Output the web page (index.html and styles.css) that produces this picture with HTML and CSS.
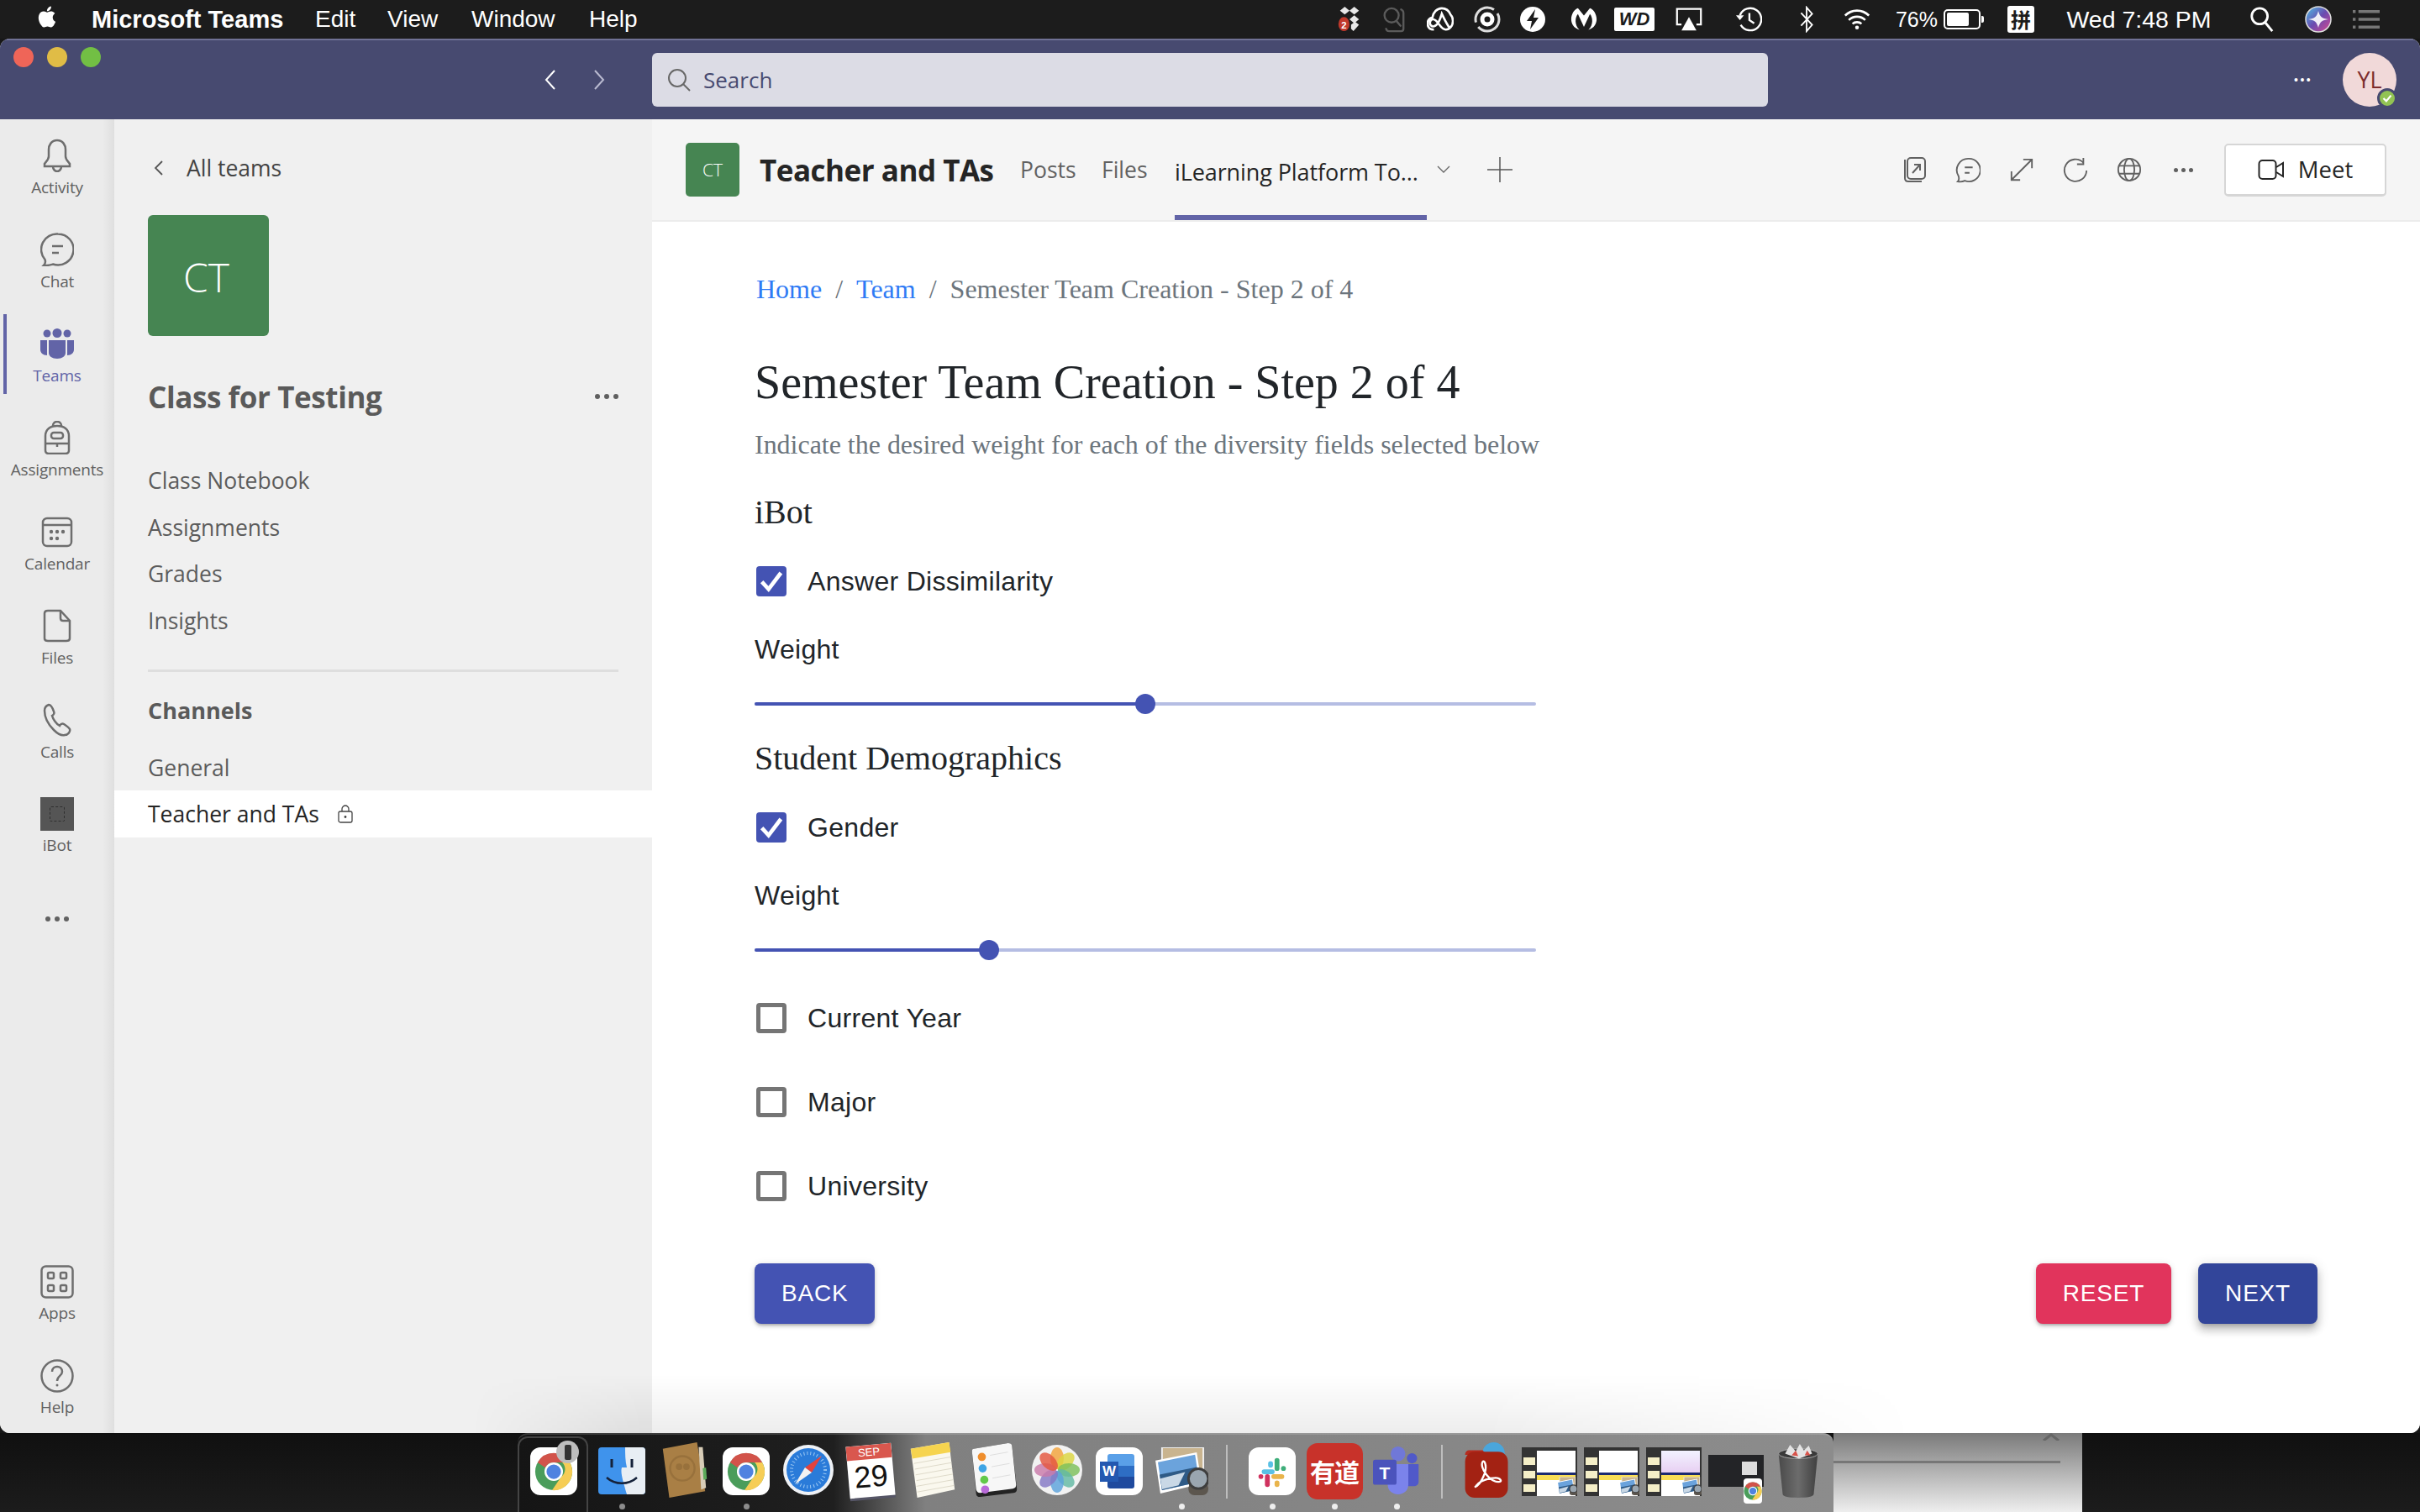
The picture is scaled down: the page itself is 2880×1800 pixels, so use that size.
FILE: index.html
```html
<!DOCTYPE html>
<html lang="en">
<head>
<meta charset="utf-8">
<title>Microsoft Teams</title>
<link rel="stylesheet" href="styles.css">
</head>
<body>
<svg class="defs" width="0" height="0" aria-hidden="true">
  <symbol id="chrome" viewBox="0 0 48 48">
    <circle cx="24" cy="24" r="23" fill="#4a9d5b"/>
    <path d="M4 12.500A23 23 0 0 1 44 12.500H24a11.500 11.500 0 0 0-10.400 6.500z" fill="#d2534a"/>
    <path d="M44 12.500A23 23 0 0 1 22 47L33.500 30a11.500 11.500 0 0 0 1-17.500z" fill="#f6cd55"/>
    <circle cx="24" cy="24" r="11.500" fill="#fff"/>
    <circle cx="24" cy="24" r="9" fill="#4f82e0"/>
  </symbol>
  <symbol id="preview-mini" viewBox="0 0 64 58">
    <rect x="8" y="0" width="50" height="44" fill="#c9b48f" stroke="#eee" stroke-width="2"/>
    <path d="M0 16 50 6l6 38L6 56z" fill="#fff"/>
    <path d="M3 18 48 9l5 33L8 52z" fill="#6ba3dc"/>
    <path d="M5 33 50 24l3 18L8 52z" fill="#2e5a86"/>
    <path d="M6 38l30-8-8 16-20 5z" fill="#c9d8e6"/>
    <rect x="40" y="42" width="24" height="16" rx="7" fill="#5c564e"/>
    <circle cx="52" cy="38" r="12" fill="#9aa6b0" stroke="#3e3e3e" stroke-width="3"/>
  </symbol>
</svg>

<header class="menubar">
  <svg class="apple" viewBox="0 0 24 24"><path fill="#fff" d="M18.710 19.500c-.83 1.240-1.710 2.450-3.050 2.470-1.340.03-1.770-.79-3.290-.79-1.530 0-2 .77-3.270.82-1.310.05-2.300-1.320-3.140-2.530C4.250 17 2.940 12.450 4.700 9.390c.87-1.520 2.430-2.480 4.120-2.510 1.280-.02 2.500.87 3.290.87.78 0 2.260-1.070 3.800-.91.65.03 2.470.26 3.640 1.980-.09.06-2.170 1.280-2.150 3.810.03 3.020 2.650 4.030 2.680 4.040-.03.07-.42 1.440-1.380 2.830M13 3.500c.73-.83 1.940-1.460 2.940-1.500.13 1.170-.34 2.350-1.040 3.190-.69.85-1.830 1.510-2.950 1.420-.15-1.150.41-2.350 1.050-3.110z"/></svg>
  <span class="app-name">Microsoft Teams</span>
  <span class="menu-item">Edit</span>
  <span class="menu-item">View</span>
  <span class="menu-item">Window</span>
  <span class="menu-item">Help</span>
  <div class="tray">
    <svg class="tray-icon" viewBox="0 0 30 34"><g fill="#e8e8e8"><path d="M9 1l6 5-6 5-6-5zM21 1l6 5-6 5-6-5zM21 12l6 5-6 5-6-5zM17 24l5-4 5 4-7 8-3-3z"/></g><ellipse cx="8" cy="23" rx="7" ry="9" fill="#c0392b"/><text x="8" y="29" class="badge-num">2</text></svg>
    <svg class="tray-icon" viewBox="0 0 30 34" fill="none" stroke="#5b5b5b" stroke-width="2.500"><circle cx="13" cy="12" r="9"/><path d="M19 19l6 7M24 4c3 1 4 3 4 5v20c0 2-1 3-3 3H10c-3 0-4-2-4-4"/></svg>
    <svg class="tray-icon" viewBox="0 0 34 32" fill="none" stroke="#fff" stroke-width="2.800"><path d="M9 29c-5 0-8-3-8-8 0-4 3-7 6-7C8 7 13 2 19 2c5 0 9 3 11 8 2 2 3 5 3 8 0 6-4 11-9 11-7 0-10-13-16-13-3 0-4 3-4 5 0 2 2 4 4 4 5 0 9-9 11-16 3 6 6 13 10 18"/></svg>
    <svg class="tray-icon" viewBox="0 0 32 32" fill="none"><circle cx="16" cy="16" r="14" stroke="#ddd" stroke-width="3" stroke-dasharray="34 6"/><circle cx="16" cy="16" r="6" stroke="#fff" stroke-width="5"/></svg>
    <svg class="tray-icon" viewBox="0 0 32 32"><circle cx="16" cy="16" r="15" fill="#fff"/><path d="M19 4 9 18h6l-2 10 10-14h-6z" fill="#1c1c1c"/></svg>
    <svg class="tray-icon" viewBox="0 0 36 32"><path d="M18 26 10 9c-4 4-5 15 2 21-8-2-11-9-11-14C1 8 6 2 10 1l8 10 8-10c4 1 9 7 9 15 0 5-3 12-11 14 7-6 6-17 2-21z" fill="#fff"/></svg>
    <span class="wd-badge">WD</span>
    <svg class="tray-icon" viewBox="0 0 36 32"><path d="M8 23H2V2h32v21h-6" fill="none" stroke="#fff" stroke-width="2.500"/><path d="M18 13l10 18H8z" fill="#fff"/></svg>
    <svg class="tray-icon" viewBox="0 0 34 32" fill="none" stroke="#fff" stroke-width="2.500"><path d="M6 11a14 14 0 1 1 1 12"/><path d="M18 8v9l6 4"/><path d="M1 11h10l-5 6z" fill="#fff" stroke="none"/></svg>
    <svg class="tray-icon tray-narrow" viewBox="0 0 20 34" fill="none" stroke="#fff" stroke-width="2"><path d="M3 9l14 15-7 8V2l7 8L3 25"/></svg>
    <svg class="tray-icon" viewBox="0 0 36 30" fill="none" stroke="#fff" stroke-width="3"><path d="M2 10c9-9 23-9 32 0M7 16c6-6 16-6 22 0M12 21c3-3 9-3 12 0"/><circle cx="18" cy="26" r="2.500" fill="#fff" stroke="none"/></svg>
    <span class="tray-pct">76%</span>
    <span class="battery"><span class="battery-fill"></span></span>
    <span class="pinyin">拼</span>
    <span class="tray-time">Wed 7:48 PM</span>
    <svg class="tray-icon" viewBox="0 0 32 34" fill="none" stroke="#fff" stroke-width="3"><circle cx="13" cy="13" r="10"/><path d="M20 21l9 11"/></svg>
    <svg class="tray-siri" viewBox="0 0 32 32"><defs><linearGradient id="siri-g" x1="0" y1="0" x2="1" y2="1"><stop offset="0" stop-color="#4cc3e8"/><stop offset=".5" stop-color="#6a4bb0"/><stop offset="1" stop-color="#d9478f"/></linearGradient></defs><circle cx="16" cy="16" r="15" fill="url(#siri-g)" stroke="#ddd" stroke-width="1.500"/><path d="M4 16c8-1 10-3 12-10 2 7 4 9 12 10-8 1-10 3-12 10-2-7-4-9-12-10z" fill="#fff" opacity=".9"/></svg>
    <svg class="tray-icon" viewBox="0 0 38 30" fill="#777"><path d="M0 2h4v4H0zM8 2h30v4H8zM0 13h4v4H0zM8 13h30v4H8zM0 24h4v4H0zM8 24h30v4H8z"/></svg>
  </div>
</header>

<div class="window">
  <div class="titlebar">
    <div class="lights">
      <span class="light light-red"></span><span class="light light-yellow"></span><span class="light light-green"></span>
    </div>
    <div class="nav-arrows">
      <svg class="nav-arrow" viewBox="0 0 16 26" fill="none" stroke="#fff" stroke-width="2"><path d="M13 2 3 13l10 11"/></svg>
      <svg class="nav-arrow nav-arrow-off" viewBox="0 0 16 26" fill="none" stroke="#b9bad0" stroke-width="2"><path d="M3 2l10 11L3 24"/></svg>
    </div>
    <div class="search">
      <svg class="search-icon" viewBox="0 0 28 28" fill="none" stroke="#686868" stroke-width="2"><circle cx="12" cy="12" r="10"/><path d="M19 19l8 8"/></svg>
      <span>Search</span>
    </div>
    <span class="title-dots">•••</span>
    <div class="avatar">YL<span class="status"><svg viewBox="0 0 16 16" fill="none" stroke="#fff" stroke-width="2"><path d="M4 8l3 3 5-6"/></svg></span></div>
  </div>

  <div class="workspace">
    <nav class="rail">
      <div class="rail-item">
        <svg class="rail-icon" viewBox="0 0 40 40"><path d="M20 2c-7 0-10 6-10 11v8c0 4-3 6-5 9v3h30v-3c-2-3-5-5-5-9v-8c0-5-3-11-10-11z"/><path d="M15 33c0 3 2 6 5 6s5-3 5-6"/></svg>
        <span class="rail-label">Activity</span>
      </div>
      <div class="rail-item">
        <svg class="rail-icon" viewBox="0 0 40 40"><path d="M21 1.500a18.500 18.500 0 1 1-6 36c-3 1.500-7 1.500-11 1.500 2-2 2.500-4 1.500-7A18.500 18.500 0 0 1 21 1.500z"/><path d="M14 16h13M14 24h8"/></svg>
        <span class="rail-label">Chat</span>
      </div>
      <div class="rail-item rail-item-active">
        <svg class="rail-icon rail-icon-solid" viewBox="0 0 40 36"><circle cx="8" cy="6" r="4.500"/><circle cx="20" cy="5.500" r="5.500"/><circle cx="32" cy="6" r="4.500"/><path d="M0 14h8v18c-5 0-8-3-8-7zM32 14h8v11c0 4-3 7-8 7zM10 14h20v15c0 4-4 7-10 7s-10-3-10-7z"/></svg>
        <span class="rail-label">Teams</span>
      </div>
      <div class="rail-item">
        <svg class="rail-icon" viewBox="0 0 40 40"><path d="M6 18c0-8 6-12 14-12s14 4 14 12v17c0 3-2 4-4 4H10c-2 0-4-1-4-4z"/><path d="M15 6c0-3 2-5 5-5s5 2 5 5"/><rect x="13" y="14" width="14" height="7" rx="3"/><path d="M6 27h28M20 27v4"/></svg>
        <span class="rail-label">Assignments</span>
      </div>
      <div class="rail-item">
        <svg class="rail-icon" viewBox="0 0 40 40"><rect x="3" y="4" width="34" height="33" rx="5"/><path d="M3 12h34"/><g class="rail-dots"><circle cx="13" cy="20" r="2.200"/><circle cx="20" cy="20" r="2.200"/><circle cx="27" cy="20" r="2.200"/><circle cx="13" cy="28" r="2.200"/><circle cx="20" cy="28" r="2.200"/></g></svg>
        <span class="rail-label">Calendar</span>
      </div>
      <div class="rail-item">
        <svg class="rail-icon" viewBox="0 0 40 40"><path d="M9 2h15l11 12v21c0 2-2 3-4 3H9c-2 0-4-1-4-3V5c0-2 2-3 4-3z"/><path d="M24 2v9c0 2 1 3 3 3h8"/></svg>
        <span class="rail-label">Files</span>
      </div>
      <div class="rail-item">
        <svg class="rail-icon" viewBox="0 0 40 40"><path d="M10 2c-3 1-5 3-5 7 0 9 5 17 11 23 4 4 9 7 13 6 4 0 7-4 6-7-1-2-4-4-7-6-2-1-4 0-5 2-4-2-8-8-9-12 2-1 3-3 2-5-1-3-3-8-6-8z"/></svg>
        <span class="rail-label">Calls</span>
      </div>
      <div class="rail-item rail-item-ibot">
        <span class="ibot-tile"><span class="ibot-inner"></span></span>
        <span class="rail-label">iBot</span>
      </div>
      <div class="rail-more"><span></span><span></span><span></span></div>
      <div class="rail-bottom">
        <div class="rail-item">
          <svg class="rail-icon" viewBox="0 0 40 40"><rect x="1.500" y="1.500" width="37" height="37" rx="5"/><rect x="9" y="9" width="7" height="7" rx="1.500"/><rect x="24" y="9" width="7" height="7" rx="1.500"/><rect x="9" y="24" width="7" height="7" rx="1.500"/><rect x="24" y="24" width="7" height="7" rx="1.500"/></svg>
          <span class="rail-label">Apps</span>
        </div>
        <div class="rail-item">
          <svg class="rail-icon" viewBox="0 0 40 40"><circle cx="20" cy="20" r="18.500"/><path d="M14 15c0-4 3-6 6-6s6 2 6 6c0 5-6 5-6 11"/><circle class="rail-fill" cx="20" cy="31" r="1.500"/></svg>
          <span class="rail-label">Help</span>
        </div>
      </div>
    </nav>

    <aside class="panel">
      <div class="back-row">
        <svg class="back-chevron" viewBox="0 0 12 20" fill="none" stroke="#555" stroke-width="1.800"><path d="M10 2 2 10l8 8"/></svg>
        <span>All teams</span>
      </div>
      <div class="team-tile">CT</div>
      <div class="team-title-row">
        <span class="team-title">Class for Testing</span>
        <span class="dots dots-team"><span></span><span></span><span></span></span>
      </div>
      <ul class="panel-list panel-list-top">
        <li class="panel-item">Class Notebook</li>
        <li class="panel-item">Assignments</li>
        <li class="panel-item">Grades</li>
        <li class="panel-item">Insights</li>
      </ul>
      <div class="panel-divider"></div>
      <div class="channels-head">Channels</div>
      <ul class="panel-list panel-list-channels">
        <li class="panel-item">General</li>
        <li class="panel-item panel-item-active">Teacher and TAs
          <svg class="lock" viewBox="0 0 20 22" fill="none" stroke="#444" stroke-width="1.300"><rect x="2" y="8" width="16" height="13" rx="2"/><path d="M6 8V5c0-2 2-4 4-4s4 2 4 4v3"/><circle cx="10" cy="14.500" r=".8" fill="#444"/></svg>
        </li>
      </ul>
    </aside>

    <main class="main">
      <div class="chan-header">
        <div class="chan-tile">CT</div>
        <span class="chan-title">Teacher and TAs</span>
        <span class="chan-tab chan-tab-posts">Posts</span>
        <span class="chan-tab chan-tab-files">Files</span>
        <span class="chan-tab-active">iLearning Platform To...</span>
        <svg class="tab-chevron" viewBox="0 0 16 10" fill="none" stroke="#666" stroke-width="1.300"><path d="M1 1l7 7 7-7"/></svg>
        <svg class="tab-plus" viewBox="0 0 30 30" stroke="#555" stroke-width="1.500"><path d="M15 0v30M0 15h30"/></svg>
        <div class="chan-tools">
          <span class="tool"><svg viewBox="0 0 30 32" fill="none" stroke="#616161" stroke-width="2"><path d="M4 4v22c0 3 2 4 4 4h16"/><rect x="7" y="2" width="21" height="25" rx="4"/><path d="M13 20l9-10M15 10h7v7"/></svg></span>
          <span class="tool"><svg viewBox="0 0 32 32" fill="none" stroke="#616161" stroke-width="2"><path d="M17 2a14.500 14.500 0 1 1-5 28c-2 1-6 1.500-9 1 2-2 2-4 1-7A14.500 14.500 0 0 1 17 2z"/><path d="M12 13h10M12 20h6"/></svg></span>
          <span class="tool"><svg viewBox="0 0 32 32" fill="none" stroke="#616161" stroke-width="2"><path d="M4 28 28 4M18 3h11v11M3 18v11h11"/></svg></span>
          <span class="tool"><svg viewBox="0 0 32 32" fill="none" stroke="#616161" stroke-width="2"><path d="M26 7a14 14 0 1 0 4 10"/><path d="M26 1v8h-8"/></svg></span>
          <span class="tool"><svg viewBox="0 0 32 32" fill="none" stroke="#616161" stroke-width="2"><circle cx="16" cy="16" r="14"/><ellipse cx="16" cy="16" rx="6.500" ry="14"/><path d="M3 11h26M3 21h26"/></svg></span>
          <span class="tool"><span class="dots dots-tool"><span></span><span></span><span></span></span></span>
          <button class="meet-btn" type="button"><svg viewBox="0 0 32 26" fill="none" stroke="#252525" stroke-width="2"><rect x="1.500" y="2" width="20" height="22" rx="4"/><path d="M22 10l8-5v16l-8-5"/></svg>Meet</button>
        </div>
      </div>

      <div class="content">
        <div class="crumbs">
          <a class="crumb-link">Home</a><span class="crumb-sep">/</span><a class="crumb-link">Team</a><span class="crumb-sep">/</span><span class="crumb-now">Semester Team Creation - Step 2 of 4</span>
        </div>
        <h1 class="page-title">Semester Team Creation - Step 2 of 4</h1>
        <p class="page-sub">Indicate the desired weight for each of the diversity fields selected below</p>
        <h2 class="group-title group-first">iBot</h2>
        <div class="check-row check-after-title"><span class="box box-on"><svg viewBox="0 0 24 24" fill="none" stroke="#fff" stroke-width="3.500"><path d="M3.500 12.500l6 6.500L20.500 4.500"/></svg></span><span class="check-label">Answer Dissimilarity</span></div>
        <div class="weight">Weight</div>
        <div class="slider"><span class="slider-fill slider-fill-half"></span><span class="thumb"></span></div>
        <h2 class="group-title group-second">Student Demographics</h2>
        <div class="check-row check-after-title"><span class="box box-on"><svg viewBox="0 0 24 24" fill="none" stroke="#fff" stroke-width="3.500"><path d="M3.500 12.500l6 6.500L20.500 4.500"/></svg></span><span class="check-label">Gender</span></div>
        <div class="weight">Weight</div>
        <div class="slider"><span class="slider-fill slider-fill-third"></span><span class="thumb"></span></div>
        <div class="check-row check-first-off"><span class="box"></span><span class="check-label">Current Year</span></div>
        <div class="check-row check-off"><span class="box"></span><span class="check-label">Major</span></div>
        <div class="check-row check-off"><span class="box"></span><span class="check-label">University</span></div>
        <div class="actions">
          <button class="btn btn-back" type="button">BACK</button>
          <button class="btn btn-reset" type="button">RESET</button>
          <button class="btn btn-next" type="button">NEXT</button>
        </div>
      </div>
    </main>
  </div>
  <div class="dock-glow"></div>
</div>

<div class="desktop">
  <div class="dock">
    <div class="dock-item dock-item-recent">
      <span class="tile-white"><svg viewBox="0 0 48 48"><use href="#chrome"/></svg></span>
      <span class="phone-badge"><span class="phone-shape"></span></span>
    </div>
    <div class="dock-item dock-run dock-run-dim">
      <svg class="dock-svg" viewBox="0 0 56 56"><rect width="56" height="56" rx="4" fill="#3f93ec"/><path d="M32 0h20a4 4 0 0 1 4 4v48a4 4 0 0 1-4 4H34c-4-14-8-26-6-32h6c-2-8-2-16-2-24z" fill="#e8eef4"/><path d="M16 14v10M40 14v10" stroke="#15223a" stroke-width="3"/><path d="M10 36c10 9 26 9 36 0" fill="none" stroke="#15223a" stroke-width="2.500"/></svg>
    </div>
    <div class="dock-item">
      <svg class="dock-svg dock-svg-tall" viewBox="0 0 56 68"><path d="M2 8 44 0l10 60-44 8z" fill="#a97f45"/><path d="M46 6h5l4 50-6 2z" fill="#d8cdb8"/><path d="M51 32l4-1 1 14-4 1z" fill="#5cab5a"/><circle cx="26" cy="32" r="15" fill="none" stroke="#98713c" stroke-width="2.500"/><circle cx="22" cy="30" r="4" fill="#98713c"/><circle cx="31" cy="30" r="4" fill="#98713c"/></svg>
    </div>
    <div class="dock-item dock-run dock-run-dim">
      <span class="tile-white"><svg viewBox="0 0 48 48"><use href="#chrome"/></svg></span>
    </div>
    <div class="dock-item">
      <svg class="dock-svg dock-svg-round" viewBox="0 0 60 60"><circle cx="30" cy="30" r="30" fill="#eef1f5"/><circle cx="30" cy="30" r="26" fill="#2a7bd9"/><circle cx="30" cy="30" r="20" fill="none" stroke="#9cc8f2" stroke-width="4" stroke-dasharray="1 3"/><path d="M46 13 26 27l8 6z" fill="#e2433d"/><path d="M14 47 34 33l-8-6z" fill="#f2f2f2"/></svg>
    </div>
    <div class="dock-item">
      <div class="cal-tile"><span class="cal-month">SEP</span><span class="cal-day">29</span></div>
    </div>
    <div class="dock-item">
      <svg class="dock-svg dock-svg-tall" viewBox="0 0 56 68"><path d="M1 8 48 0l7 58-46 10z" fill="#faf8ee"/><path d="M1 8 48 0l2 12-47 8z" fill="#f6d44f"/><path d="M5 26l45-8M6 33l45-8M7 40l45-8M8 47l45-8M8 54l45-8M9 61l45-8" stroke="#ddd9c8" stroke-width="1"/></svg>
    </div>
    <div class="dock-item">
      <svg class="dock-svg dock-svg-tall" viewBox="0 0 56 68"><path d="M2 8 44 1c3 0 5 1 5 4l6 52c0 3-1 5-4 5L10 67c-3 0-5-1-5-4L0 12c0-2 0-4 2-4z" fill="#232323"/><path d="M2 8 44 1c3 0 5 1 5 4l5 47c0 3-1 4-4 5L10 62c-3 0-4-1-5-4L0 12c0-2 0-4 2-4z" fill="#f7f7f7"/><circle cx="12" cy="18" r="5" fill="#ef8e2c"/><circle cx="13" cy="32" r="5" fill="#3fa5e5"/><circle cx="15" cy="46" r="5" fill="#62c94a"/><circle cx="16" cy="58" r="5" fill="#b96ad9"/><path d="M22 16l22-4M24 30l22-4M25 44l22-4" stroke="#ddd" stroke-width="1"/></svg>
    </div>
    <div class="dock-item">
      <svg class="dock-svg dock-svg-round" viewBox="0 0 60 60"><circle cx="30" cy="30" r="30" fill="#f2f2f2"/><g fill-opacity=".82"><ellipse cx="30" cy="16" rx="8" ry="13" fill="#f3a33b"/><ellipse cx="30" cy="16" rx="8" ry="13" fill="#dcd53f" transform="rotate(45 30 30)"/><ellipse cx="30" cy="16" rx="8" ry="13" fill="#7cc05a" transform="rotate(90 30 30)"/><ellipse cx="30" cy="16" rx="8" ry="13" fill="#63b9a3" transform="rotate(135 30 30)"/><ellipse cx="30" cy="16" rx="8" ry="13" fill="#5ba2dc" transform="rotate(180 30 30)"/><ellipse cx="30" cy="16" rx="8" ry="13" fill="#8477c5" transform="rotate(225 30 30)"/><ellipse cx="30" cy="16" rx="8" ry="13" fill="#c97aa9" transform="rotate(270 30 30)"/><ellipse cx="30" cy="16" rx="8" ry="13" fill="#e4573f" transform="rotate(315 30 30)"/></g></svg>
    </div>
    <div class="dock-item">
      <div class="word-tile"><span class="word-page"></span><span class="word-w">W</span></div>
    </div>
    <div class="dock-item dock-run">
      <svg class="dock-preview" viewBox="0 0 64 58"><use href="#preview-mini"/></svg>
    </div>
    <span class="dock-sep"></span>
    <div class="dock-item dock-run">
      <span class="tile-white"><svg viewBox="0 0 48 48"><rect x="11" y="21" width="16" height="6" rx="3" fill="#59c0e5"/><rect x="19" y="11" width="6" height="8" rx="3" fill="#59c0e5"/><rect x="27" y="7" width="6" height="16" rx="3" fill="#3fae7a"/><rect x="35" y="17" width="6" height="6" rx="3" fill="#3fae7a"/><rect x="7" y="27" width="6" height="6" rx="3" fill="#d0335f"/><rect x="15" y="27" width="6" height="16" rx="3" fill="#d0335f"/><rect x="23" y="27" width="16" height="6" rx="3" fill="#e9b44c"/><rect x="27" y="35" width="6" height="8" rx="3" fill="#e9b44c"/></svg></span>
    </div>
    <div class="dock-item dock-run">
      <div class="youdao">有道</div>
    </div>
    <div class="dock-item dock-run">
      <svg class="dock-svg dock-svg-tall" viewBox="0 0 64 68"><circle cx="34" cy="12" r="10" fill="#7078d8"/><circle cx="53" cy="18" r="7" fill="#5059c9"/><path d="M44 26h18v24c0 4-3 6-7 6H44z" fill="#5059c9"/><path d="M20 26h28v28c0 8-6 13-14 13S20 62 20 54z" fill="#7b83eb"/><rect y="20" width="32" height="34" rx="3" fill="#4b53bc"/><text x="16" y="46" class="teams-t">T</text></svg>
    </div>
    <span class="dock-sep"></span>
    <div class="dock-item">
      <div class="acrobat">
        <svg viewBox="0 0 56 70"><circle cx="36" cy="14" r="14" fill="#4aa6dc"/><path d="M0 16c0-4 2-6 6-6h16l6 6H0z" fill="#b52b1e"/><rect y="12" width="54" height="58" rx="12" fill="#a32213"/><path d="M13 56c6-2 16-20 12-30-2-5-5 0-3 6 3 9 12 18 20 18 6 0 2-5-3-5-8 0-20 3-24 9-2 2-2 3-2 2z" fill="none" stroke="#fff" stroke-width="2.500"/></svg>
      </div>
    </div>
    <div class="dock-item">
      <div class="thumb-shot"><span class="shot-side"></span><span class="shot-page"></span><span class="shot-band"></span><svg class="shot-preview" viewBox="0 0 64 58"><use href="#preview-mini"/></svg></div>
    </div>
    <div class="dock-item">
      <div class="thumb-shot"><span class="shot-side"></span><span class="shot-page"></span><span class="shot-band"></span><svg class="shot-preview" viewBox="0 0 64 58"><use href="#preview-mini"/></svg></div>
    </div>
    <div class="dock-item">
      <div class="thumb-shot"><span class="shot-side"></span><span class="shot-page shot-page-marked"></span><span class="shot-band"></span><svg class="shot-preview" viewBox="0 0 64 58"><use href="#preview-mini"/></svg></div>
    </div>
    <div class="dock-item">
      <div class="thumb-dark"><span class="dark-card"></span><span class="dark-chrome"><svg viewBox="0 0 48 48"><use href="#chrome"/></svg></span></div>
    </div>
    <div class="dock-item">
      <svg class="dock-svg dock-svg-tall" viewBox="0 0 52 68"><defs><linearGradient id="trash-g" x1="0" y1="0" x2="1" y2="0"><stop offset="0" stop-color="#4a4a4a"/><stop offset=".5" stop-color="#6c6c6c"/><stop offset="1" stop-color="#3f3f3f"/></linearGradient></defs><path d="M2 14h48l-5 50c-1 3-7 4-19 4S8 67 7 64z" fill="url(#trash-g)"/><ellipse cx="26" cy="14" rx="24" ry="6" fill="#3a3a3a" stroke="#aaa"/><path d="M10 14 16 3l7 8 5-9 5 8 6-6 4 10-16 6z" fill="#e4e4e4"/><path d="M18 16l5-6 3 7zM34 16l3-6 4 6z" fill="#d8534a"/></svg>
    </div>
  </div>
  <div class="behind-window"><svg class="behind-caret" viewBox="0 0 20 9" fill="none" stroke="#666" stroke-width="3"><path d="M1 9l9-7 9 7"/></svg><span class="behind-line"></span></div>
</div>
</body>
</html>
```

FILE: styles.css
```css
* { box-sizing: border-box; }
html, body { margin: 0; padding: 0; }
body {
  width: 2880px;
  height: 1800px;
  overflow: hidden;
  display: grid;
  grid-template-rows: 46px 1660px 94px;
  background: #171717;
  font-family: "Open Sans", "Noto Sans", sans-serif;
  color: #252525;
}
.defs { position: absolute; }

/* Menu bar */
.menubar {
  display: flex;
  align-items: center;
  background: #1c1c1c;
  color: #fff;
  font-family: "Liberation Sans", sans-serif;
  font-size: 28px;
  padding-left: 41px;
}
.apple { width: 30px; height: 34px; margin-top: -6px; }
.app-name { font-weight: 700; font-size: 29px; margin-left: 38px; width: 266px; flex: none; }
.menu-item:nth-of-type(2) { width: 86px; }
.menu-item:nth-of-type(3) { width: 100px; }
.menu-item:nth-of-type(4) { width: 140px; }
.menu-item { flex: none; }
.tray {
  margin-left: auto;
  display: grid;
  grid-template-columns: 52px 52px 60px 52px 56px 66px 54px 76px 66px 72px 48px 72px 58px 82px 199px 94px 40px 74px;
  align-items: center;
  justify-items: center;
  padding-right: 27px;
}
.tray-icon { width: 32px; height: 32px; }
.tray-narrow { width: 20px; }
.badge-num { font: 700 12px "Liberation Sans", sans-serif; fill: #fff; text-anchor: middle; }
.wd-badge {
  width: 48px; height: 28px;
  background: #fff; color: #1c1c1c;
  font: italic 700 22px/28px "Liberation Sans", sans-serif;
  text-align: center; border-radius: 2px;
}
.tray-pct { justify-self: end; font-size: 25px; }
.battery {
  width: 44px; height: 24px;
  border: 2px solid #fff; border-radius: 5px;
  padding: 2px; display: block; position: relative;
}
.battery::after {
  content: ""; position: absolute; right: -6px; top: 6px;
  width: 3px; height: 8px; background: #fff; border-radius: 0 2px 2px 0;
}
.battery-fill { display: block; width: 72%; height: 100%; background: #fff; border-radius: 2px; }
.pinyin {
  width: 32px; height: 32px; background: #fff; color: #1c1c1c;
  border-radius: 3px; text-align: center;
  font: 700 24px/32px "Noto Sans CJK SC", sans-serif;
}
.tray-time { font-size: 28.500px; white-space: nowrap; }
.tray-siri { width: 32px; height: 32px; }

/* Window */
.window {
  position: relative;
  border-radius: 12px;
  overflow: hidden;
  display: flex;
  flex-direction: column;
  background: #fff;
}
.titlebar {
  height: 96px;
  flex: none;
  display: flex;
  align-items: center;
  background: #474a70;
  border-top: 2px solid #6f7194;
  padding-left: 16px;
  position: relative;
}
.lights { display: flex; gap: 16px; align-self: flex-start; margin-top: 8px; width: 104px; flex: none; }
.light { width: 24px; height: 24px; border-radius: 50%; flex: none; }
.light-red { background: #ef6558; }
.light-yellow { background: #e0bc46; }
.light-green { background: #72bf44; }
.nav-arrows { display: flex; gap: 42px; margin-left: 527px; width: 129px; flex: none; }
.nav-arrow { width: 16px; height: 26px; flex: none; }
.search {
  width: 1328px; height: 64px; flex: none;
  background: #dcdce5; border-radius: 6px;
  display: flex; align-items: center; gap: 15px;
  padding-left: 18px;
  color: #474a70; font-size: 26px;
}
.search-icon { width: 28px; height: 28px; }
.title-dots { color: #fff; font-size: 14px; letter-spacing: 2.500px; margin-left: 626px; width: 58px; flex: none; font-family: "Liberation Sans", sans-serif; }
.avatar {
  width: 64px; height: 64px; border-radius: 50%;
  background: #f1d9d9; color: #7c2d2d;
  font-size: 27px; line-height: 64px; text-align: center;
  position: relative; flex: none;
}
.status {
  position: absolute; right: -1px; bottom: -2px;
  width: 24px; height: 24px; border-radius: 50%;
  background: #92c353; border: 3px solid #474a70;
  display: flex;
}
.status svg { width: 100%; height: 100%; }

.workspace { flex: 1; display: flex; min-height: 0; }

/* Rail */
.rail {
  width: 136px; flex: none;
  background: linear-gradient(to right, #ebebeb 0, #ebebeb 122px, #dfdfdf 136px);
  display: flex; flex-direction: column;
  padding-top: 12px; position: relative;
}
.rail-item {
  height: 99px; margin-bottom: 13px; padding-top: 11px;
  display: flex; flex-direction: column; align-items: center;
  position: relative; flex: none;
}
.rail-icon { width: 40px; height: 40px; fill: none; stroke: #6e6e6e; stroke-width: 2.500; flex: none; }
.rail-icon-solid { fill: #6264a7; stroke: none; }
.rail-dots, .rail-fill { fill: #6e6e6e; stroke: none; }
.rail-label { font-size: 19px; line-height: 24px; margin-top: 6px; color: #616161; letter-spacing: -.2px; }
.rail-item-active .rail-label { color: #6264a7; }
.rail-item-active::before {
  content: ""; position: absolute; left: 4px; top: -4px; width: 4px; height: 95px;
  background: #6264a7;
}
.ibot-tile {
  width: 40px; height: 40px; flex: none; background: #555;
  display: flex; align-items: center; justify-content: center;
}
.ibot-inner { width: 18px; height: 18px; border: 1.500px dashed #2f2f2f; border-radius: 2px; }
.rail-item-ibot .rail-label { margin-top: 5px; }
.rail-more { display: flex; justify-content: center; gap: 5px; margin-top: 41px; }
.rail-more span { width: 6px; height: 6px; border-radius: 50%; background: #616161; }
.rail-bottom { margin-top: auto; }
.rail-bottom .rail-label { margin-top: 5px; }
.rail-bottom .rail-item:last-child { margin-bottom: 0; }

/* Panel */
.panel {
  width: 640px; flex: none;
  background: #f0f0f0;
  padding: 38px 40px 0;
  font-size: 26.500px; color: #5c5c5c;
}
.back-row { height: 40px; display: flex; align-items: center; gap: 27px; padding-left: 7px; color: #444; }
.back-chevron { width: 12px; height: 20px; flex: none; }
.team-tile {
  width: 144px; height: 144px; margin-top: 36px;
  background: #468552; border-radius: 6px; color: #fff;
  font-size: 48px; font-weight: 300; line-height: 148px; text-align: center; padding-right: 5px;
}
.team-title-row { display: flex; justify-content: space-between; align-items: center; margin-top: 48px; height: 48px; }
.team-title { font-weight: 700; font-size: 35px; color: #5a5a5a; letter-spacing: -.4px; }
.dots { display: flex; gap: 4px; }
.dots span { width: 5px; height: 5px; border-radius: 50%; background: #5f5f5f; }
.dots-team { gap: 5px; }
.dots-team span { width: 6px; height: 6px; }
.panel-list { list-style: none; margin: 0; padding: 0; }
.panel-list-top { margin-top: 48px; }
.panel-list-channels { margin-top: 20px; }
.panel-item { height: 55.700px; display: flex; align-items: center; }
.panel-item-active {
  background: #fff; color: #252525;
  margin: 0 -40px; padding-left: 40px;
}
.lock { width: 20px; height: 22px; margin-left: 21px; }
.panel-divider { height: 3px; background: #dedede; margin-top: 30px; }
.channels-head { font-weight: 700; height: 40px; line-height: 40px; margin-top: 26px; color: #5a5a5a; font-size: 27px; }

/* Main */
.main { flex: 1; min-width: 0; background: #fff; display: flex; flex-direction: column; }
.chan-header {
  height: 122px; flex: none;
  background: #f5f5f5;
  border-bottom: 2px solid #ececec;
  display: flex; align-items: center;
  padding: 0 40px;
}
.chan-tile {
  width: 64px; height: 64px; flex: none;
  background: #468552; border-radius: 5px; color: #fff;
  font-size: 21px; font-weight: 300; line-height: 64px; text-align: center;
}
.chan-title { font-weight: 700; font-size: 35px; margin-left: 24px; width: 310px; flex: none; letter-spacing: -.5px; }
.chan-tab { font-size: 26.500px; color: #616161; flex: none; }
.chan-tab-posts { width: 97px; }
.chan-tab-files { width: 87px; }
.chan-tab-active {
  width: 300px; flex: none; height: 120px;
  margin-bottom: 0; padding-top: 44px;
  border-bottom: 6px solid #6264a7;
  font-size: 27px; font-weight: 500; white-space: nowrap;
  color: #252525; letter-spacing: -.1px;
}
.tab-chevron { width: 16px; height: 10px; margin-left: 12px; flex: none; }
.tab-plus { width: 30px; height: 30px; margin-left: 44px; flex: none; }
.chan-tools { margin-left: auto; display: flex; align-items: center; }
.tool { width: 64px; display: flex; justify-content: center; flex: none; }
.tool svg { width: 30px; height: 32px; }
.meet-btn {
  width: 193px; height: 63px; margin-left: 17px;
  background: #fff; border: 2px solid #d6d6d6; border-bottom-width: 3px; border-radius: 5px;
  display: flex; align-items: center; justify-content: center; gap: 16px;
  font: 500 27.500px "Open Sans", sans-serif; color: #252525;
  padding: 0;
}
.meet-btn svg { width: 32px; height: 26px; }

.content {
  flex: 1; padding: 60px 122px 0;
  font-family: "Liberation Serif", serif;
  color: #212529;
}
.crumbs { display: flex; height: 40px; align-items: center; font-size: 32px; color: #6c757d; padding-left: 2px; }
.crumb-link { color: #2f7bf5; }
.crumb-sep { margin: 0 16px; }
.page-title { margin: 57px 0 0; font-size: 56px; font-weight: 400; line-height: 68px; }
.page-sub { margin: 20px 0 0; font-size: 32px; line-height: 40px; color: #6c757d; letter-spacing: -.02px; }
.group-title { margin: 0; font-size: 40px; font-weight: 400; line-height: 48px; }
.group-first { margin-top: 37px; }
.group-second { margin-top: 29px; }
.check-row {
  display: flex; align-items: center; height: 36px; gap: 25px; padding-left: 2px;
  font-family: "Liberation Sans", sans-serif; font-size: 32px; letter-spacing: .3px;
}
.check-after-title { margin-top: 40px; }
.check-first-off { margin-top: 51px; }
.check-off { margin-top: 64px; }
.box { width: 36px; height: 36px; flex: none; border: 5px solid #757575; border-radius: 4px; display: block; }
.box-on { background: #4453b3; border: 0; padding: 2px; }
.box-on svg { width: 100%; height: 100%; display: block; }
.weight { margin-top: 43px; font: 32px/40px "Liberation Sans", sans-serif; letter-spacing: .3px; }
.slider {
  width: 930px; height: 24px; margin-top: 33px;
  display: flex; align-items: center; position: relative;
}
.slider::before {
  content: ""; position: absolute; left: 0; right: 0; top: 10px; height: 4px;
  background: #b5bde3; border-radius: 2px;
}
.slider-fill { height: 4px; background: #4453b3; position: relative; flex: none; border-radius: 2px 0 0 2px; }
.slider-fill-half { width: 50%; }
.slider-fill-third { width: 30%; }
.thumb { width: 24px; height: 24px; border-radius: 50%; background: #4453b3; margin-left: -12px; position: relative; flex: none; }

.actions { display: flex; margin-top: 74px; }
.btn {
  height: 72px; border: 0; border-radius: 8px; padding: 0 32px;
  color: #fff; font: 28px "Liberation Sans", sans-serif; letter-spacing: .8px;
  box-shadow: 0 3px 3px -2px rgba(0,0,0,.2), 0 3px 4px rgba(0,0,0,.14), 0 1px 8px rgba(0,0,0,.12);
}
.btn-back { background: #4453b3; margin-right: auto; }
.btn-reset { background: #e1345c; margin-right: 32px; }
.btn-next { background: #32459a; box-shadow: 0 5px 5px -3px rgba(0,0,0,.2), 0 8px 10px 1px rgba(0,0,0,.14), 0 3px 14px 2px rgba(0,0,0,.12); }

.dock-glow {
  position: absolute; left: 560px; bottom: 0; width: 1720px; height: 70px;
  background: linear-gradient(to top, rgba(0,0,0,.07), rgba(0,0,0,0));
  -webkit-mask-image: linear-gradient(to right, transparent, #000 12%, #000 70%, transparent);
  mask-image: linear-gradient(to right, transparent, #000 12%, #000 70%, transparent);
  pointer-events: none;
}

/* Desktop + dock */
.desktop { display: flex; padding-left: 616px; background: linear-gradient(#101010, #1c1c1c); }
.dock {
  width: 1566px; flex: none; height: 94px;
  display: flex; padding: 0 5px 0 6px;
  background: linear-gradient(to right, #151515 0, #1f1f1f 24%, #808080 31%, #8c8c8c 100%);
  border-top: 2px solid rgba(255,255,255,.16);
  border-radius: 12px 12px 0 0;
  position: relative;
}
.behind-window {
  width: 296px; flex: none; position: relative;
  background: linear-gradient(#7a7a7a, #eeeeee);
}
.behind-line { position: absolute; left: 0; right: 26px; top: 33px; height: 3px; background: #777; }
.behind-caret { position: absolute; left: 249px; top: 0; width: 20px; height: 9px; }
.dock-item {
  width: 74px; flex: none; height: 92px; position: relative;
  display: flex; justify-content: center; padding-top: 15px;
}
.dock-item-recent { margin-right: 7px; }
.dock-item-recent::after {
  content: ""; position: absolute; left: -6px; top: 2px; width: 80px; height: 90px;
  border: 2px solid #444; border-bottom: 0; border-radius: 12px 12px 0 0;
}
.dock-run::before {
  content: ""; position: absolute; left: 34px; bottom: 3px;
  width: 7px; height: 7px; border-radius: 50%; background: #eee;
}
.dock-run-dim::before { background: #8c8c8c; }
.tile-white {
  width: 56px; height: 57px; background: #fff; border-radius: 12px;
  display: flex; align-items: center; justify-content: center;
}
.tile-white svg { width: 46px; height: 46px; }
.phone-badge {
  position: absolute; left: 40px; top: 7px; width: 27px; height: 27px;
  border-radius: 50%; background: #bdbdbd; z-index: 1;
  display: flex; align-items: center; justify-content: center;
}
.phone-shape { width: 8px; height: 18px; background: #333; border-radius: 2px; }
.dock-svg { width: 56px; height: 56px; }
.dock-svg-tall { width: 56px; height: 66px; margin-top: -6px; }
.dock-svg-round { width: 60px; height: 60px; margin-top: -3px; }
.dock-preview { width: 63px; height: 57px; flex: none; }
.cal-tile {
  width: 54px; height: 62px; margin-top: -3px;
  background: #fff; transform: rotate(-5deg); overflow: hidden;
  display: flex; flex-direction: column; align-items: center;
  box-shadow: 0 3px 0 #556;
}
.cal-month { width: 100%; height: 17px; background: #d9574e; color: #fff; text-align: center; font: 13px/17px "Liberation Sans", sans-serif; }
.cal-day { color: #111; font: 36px/42px "Liberation Sans", sans-serif; }
.word-tile { width: 56px; height: 57px; background: #fff; border-radius: 12px; position: relative; }
.word-page { position: absolute; left: 14px; top: 8px; width: 32px; height: 41px; border-radius: 3px; background: linear-gradient(#5aa0e8 0 33%, #2e6ec4 33% 66%, #1f4a9e 66%); }
.word-w { position: absolute; left: 5px; top: 17px; width: 22px; height: 24px; background: #2358b0; color: #fff; text-align: center; font: 700 17px/24px "Liberation Sans", sans-serif; }
.youdao {
  width: 67px; height: 67px; margin-top: -5px; flex: none;
  background: #c8322a; border-radius: 13px; color: #fff; text-align: center;
  font: 700 30px/67px "Noto Sans CJK SC", sans-serif; letter-spacing: -1px; white-space: nowrap;
}
.teams-t { font: 700 24px "Liberation Sans", sans-serif; fill: #fff; text-anchor: middle; }
.dock-sep { width: 2px; height: 64px; margin: 12px 16px 0; background: #bdbdbd; flex: none; }
.acrobat { width: 54px; height: 66px; margin-top: -6px; }
.acrobat svg { width: 100%; height: 100%; }
.thumb-shot { width: 66px; height: 58px; position: relative; background: #333; overflow: hidden; }
.shot-side { position: absolute; left: 2px; top: 12px; width: 14px; height: 42px; background: repeating-linear-gradient(#f5efc8 0 9px, #333 9px 16px); }
.shot-page { position: absolute; left: 18px; top: 4px; width: 46px; height: 26px; background: #fff; }
.shot-page-marked { background: linear-gradient(#f2f2ff, #e8d0f2); }
.shot-band { position: absolute; left: 18px; top: 30px; width: 46px; height: 28px; background: linear-gradient(#1c2a70 0 3px, #f9de55 3px 9px, #fff 9px); }
.shot-preview { position: absolute; right: 0; bottom: 0; width: 24px; height: 24px; }
.thumb-dark { width: 66px; height: 72px; position: relative; margin-top: 9px; }
.dark-card { position: absolute; left: 0; top: 0; width: 66px; height: 38px; background: #232427; }
.dark-card::after { content: ""; position: absolute; right: 8px; top: 8px; width: 18px; height: 16px; background: #ddd; }
.dark-chrome { position: absolute; right: 2px; top: 28px; width: 22px; height: 30px; background: #fff; border-radius: 4px; display: flex; align-items: center; }
.dark-chrome svg { width: 22px; height: 22px; }
```
